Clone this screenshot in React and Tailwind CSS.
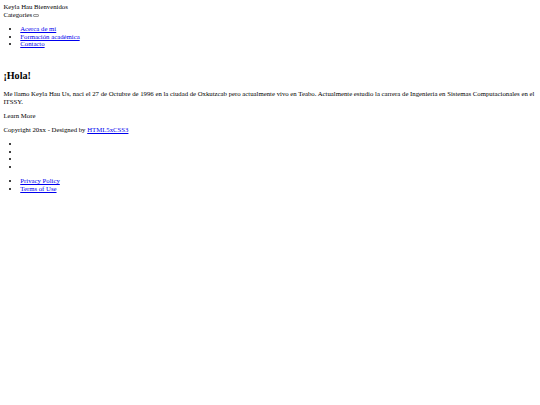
export default function App() {
  const link = "text-[#0000ee] underline";
  return (
    <div className="m-[3.375px] font-['Liberation_Serif',serif] text-[6.75px] leading-[7.5px] text-black">
      <header>
        <div>Keyla Hau Bienvenidos</div>
        <div className="flex items-end">
          <span>Categories</span>
          <button className="ml-[1px] mb-[1px] h-[3px] w-[6px] border border-[#9a9a9a] bg-[#efefef] rounded-[1px]" />
        </div>
        <ul className="list-disc pl-[16.875px] my-[6.75px]">
          <li><a href="#" className={link}>Acerca de mí</a></li>
          <li><a href="#" className={link}>Formación académica</a></li>
          <li><a href="#" className={link}>Contacto</a></li>
        </ul>
      </header>

      <section>
        <h1 className="text-[10.125px] leading-[11.6px] font-bold mt-[22.6px] mb-[8.4px]">¡Hola!</h1>
        <p className="my-[6.75px]">
          Me llamo Keyla Hau Us, nací el 27 de Octubre de 1996 en la ciudad de Oxkutzcab pero actualmente vivo en Teabo. Actualmente estudio la carrera de Ingeniería en Sistemas Computacionales en el ITSSY.
        </p>
        <p className="my-[6.75px]">Learn More</p>
      </section>

      <footer>
        <p className="my-[6.75px]">
          Copyright 20xx - Designed by <a href="#" className={link}>HTML5xCSS3</a>
        </p>
        <ul className="list-disc pl-[16.875px] my-[6.75px]">
          <li>&nbsp;</li>
          <li>&nbsp;</li>
          <li>&nbsp;</li>
          <li>&nbsp;</li>
        </ul>
        <ul className="list-disc pl-[16.875px] my-[6.75px]">
          <li><a href="#" className={link}>Privacy Policy</a></li>
          <li><a href="#" className={link}>Terms of Use</a></li>
        </ul>
      </footer>
    </div>
  );
}
